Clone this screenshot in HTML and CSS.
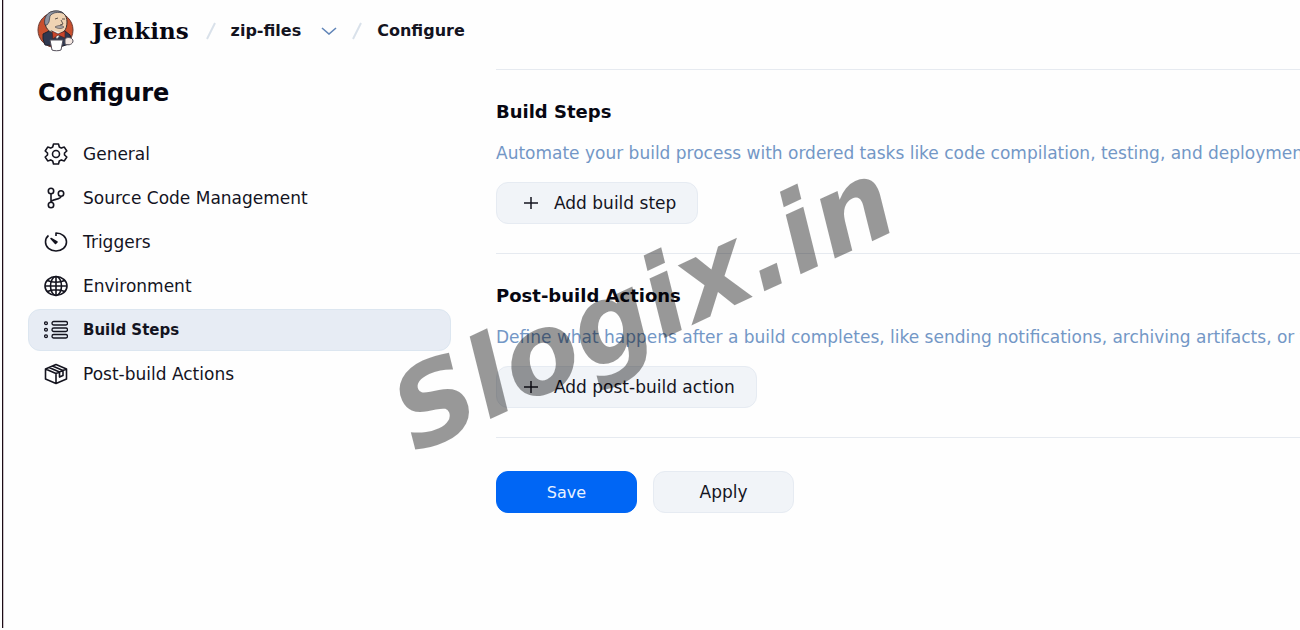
FILE: index.html
```html
<!DOCTYPE html>
<html lang="en">
<head>
    <meta charset="UTF-8">
    <meta name="viewport" content="width=device-width, initial-scale=1.0">
    <title>zip-files Config - Jenkins</title>
    <link rel="stylesheet" href="styles.css">
</head>
<body>
    <div class="page">
        <header class="header">
            <a href="#" class="brand">
                <svg class="logo" viewBox="0 0 38 42" aria-hidden="true">
                    <circle cx="18.500" cy="20" r="17.500" fill="#c9502e" stroke="#6b3a32"/>
                    <path d="M6 24l8-4 14 1 5 4 2 8-9 3-18-1-2-6z" fill="#2f3850" stroke="#22222e"/>
                    <path d="M8 12C8 4 13 1 19 1c7 0 11 4 11 11 0 8-4 12-9 12-6 0-13-4-13-12z" fill="#efd3b3" stroke="#3a3230"/>
                    <path d="M8 15C6 7 11 1 19 1c3 0 5 .5 7 2-5-1-10-1-13 3l-1 6-2 3z" fill="#8d93a0" stroke="#3a3a44" stroke-width=".7"/>
                    <path d="M18 9l3-1M25 9l3 0M24 10l2 4-3 1" fill="none" stroke="#3a3230" stroke-width=".8"/>
                    <path d="M18 17c3-2 7-2 9 0-2 2-6 2-9 0z" fill="#a9a5a5" stroke="#5a5050" stroke-width=".7"/>
                    <path d="M14 20l6 9 5-6" fill="#f4f4f4" stroke="#555" stroke-width=".7"/>
                    <path d="M15 21l6 3 7-3v7l-7-3-5 4z" fill="#c8442a" stroke="#4a2222" stroke-width=".7"/>
                    <path d="M28 29c3-3 8-1 8 2s-4 5-8 3z" fill="#f3e6e0" stroke="#55505a"/>
                    <path d="M13 30h13l-2 10c-2 1-7 1-9 0z" fill="#fff" stroke="#55505a"/>
                </svg>
                <span class="brand-name">Jenkins</span>
            </a>
            <nav class="breadcrumbs">
                <svg class="slash" viewBox="0 0 10 18" aria-hidden="true"><path d="M9 1L1 17"/></svg>
                <a href="#" class="crumb">zip-files</a>
                <button type="button" class="crumb-menu" aria-label="zip-files menu">
                    <svg viewBox="0 0 16 8"><path d="M1 1l7 6 7-6"/></svg>
                </button>
                <svg class="slash" viewBox="0 0 10 18" aria-hidden="true"><path d="M9 1L1 17"/></svg>
                <a href="#" class="crumb">Configure</a>
            </nav>
        </header>

        <div class="content">
            <aside class="sidebar">
                <h1>Configure</h1>
                <nav class="tasks">
                    <a href="#" class="task">
                        <svg class="icon" viewBox="0 0 24 22"><path d="M9.500 1h5l.8 3 2 1.100 3-1 2.500 3.900-2.300 2v2l2.300 2-2.500 3.900-3-1-2 1.100-.8 3h-5l-.8-3-2-1.100-3 1L1.200 14l2.300-2v-2L1.200 8l2.500-3.900 3 1 2-1.100z"/><circle cx="12" cy="11" r="3.500"/></svg>
                        General
                    </a>
                    <a href="#" class="task">
                        <svg class="icon" viewBox="0 0 24 22"><circle cx="7" cy="4" r="2.700"/><circle cx="17" cy="6.500" r="2.700"/><circle cx="7" cy="18" r="2.700"/><path d="M7 6.700v8.600M17 9.200c0 4-10 2.300-10 6.100"/></svg>
                        Source Code Management
                    </a>
                    <a href="#" class="task">
                        <svg class="icon" viewBox="0 0 24 22"><path d="M12 5V2c6 0 10.500 4 10.500 9S18 20 12 20 1.500 16 1.500 11c0-2.500 1-5 3-6.500"/><path d="M7 7.500l6 3.500-1.500 1.500z" fill="currentColor"/></svg>
                        Triggers
                    </a>
                    <a href="#" class="task">
                        <svg class="icon" viewBox="0 0 24 22"><ellipse cx="12" cy="11" rx="11" ry="9.500"/><ellipse cx="12" cy="11" rx="5.500" ry="9.500"/><path d="M12 1.500v19M1 11h22M3.500 5.500c4 2.300 13 2.300 17 0M3.500 16.500c4-2.300 13-2.300 17 0"/></svg>
                        Environment
                    </a>
                    <a href="#" class="task task-active">
                        <svg class="icon icon-thin" viewBox="0 0 24 22"><rect x="8" y="2.500" width="15.500" height="3.500" rx="1.700"/><rect x="8" y="9" width="15.500" height="3.500" rx="1.700"/><rect x="8" y="15.500" width="15.500" height="3.500" rx="1.700"/><circle cx="2" cy="4.200" r="1.400"/><circle cx="2" cy="10.700" r="1.400"/><circle cx="2" cy="17.200" r="1.400"/></svg>
                        Build Steps
                    </a>
                    <a href="#" class="task">
                        <svg class="icon" viewBox="0 0 24 22"><path d="M12 1.500L22.500 6v10L12 20.500 1.500 16V6zM1.500 6L12 10.500 22.500 6M12 10.500v10M5 4.500l10.500 4.600M8.500 3L19 7.500M15.500 9.100v5l3.500-1.600v-5"/></svg>
                        Post-build Actions
                    </a>
                </nav>
            </aside>

            <main class="main">
                <section class="section">
                    <h2>Build Steps</h2>
                    <p>Automate your build process with ordered tasks like code compilation, testing, and deployment.</p>
                    <button type="button" class="btn btn-add">
                        <svg class="plus" viewBox="0 0 16 14" aria-hidden="true"><path d="M8 1v12M1 7h14"/></svg>
                        Add build step
                    </button>
                </section>
                <section class="section">
                    <h2>Post-build Actions</h2>
                    <p>Define what happens after a build completes, like sending notifications, archiving artifacts, or t</p>
                    <button type="button" class="btn btn-add">
                        <svg class="plus" viewBox="0 0 16 14" aria-hidden="true"><path d="M8 1v12M1 7h14"/></svg>
                        Add post-build action
                    </button>
                </section>
                <div class="actions">
                    <button type="submit" class="btn btn-primary">Save</button>
                    <button type="button" class="btn">Apply</button>
                </div>
            </main>
        </div>

        <div class="watermark">Slogix.in</div>
    </div>
</body>
</html>
```

FILE: styles.css
```css
/* General */
* {
    box-sizing: border-box;
}

body {
    margin: 0;
    background: #fefefe;
    color: #14141f;
    font-family: "DejaVu Sans", sans-serif;
    font-size: 17px;
    line-height: 22px;
}

a {
    color: inherit;
    text-decoration: none;
}

svg {
    display: block;
    flex: none;
}

.page {
    position: relative;
    min-height: calc(100vh - 2px);
    margin-left: 2px;
    padding-left: 25px;
    border-left: 1px solid #1c0c16;
    box-shadow: inset 1px 0 #c9c2c6;
    overflow: hidden;
}

/* Header */
.header {
    display: flex;
    align-items: center;
    height: 62px;
    padding-left: 9px;
}

.brand {
    display: flex;
    align-items: center;
    gap: 17px;
}

.logo {
    width: 38px;
    height: 42px;
}

.brand-name {
    font-family: "DejaVu Serif", serif;
    font-size: 23px;
    font-weight: bold;
    color: #070712;
}

.breadcrumbs {
    display: flex;
    align-items: center;
    gap: 15px;
    margin-left: 17px;
}

.slash {
    width: 10px;
    height: 18px;
    fill: none;
    stroke: #d9e1ea;
    stroke-width: 2;
}

.crumb {
    font-size: 16px;
    font-weight: bold;
}

.crumb-menu {
    padding: 4px 0 4px 5px;
    border: 0;
    background: none;
    cursor: pointer;
}

.crumb-menu svg {
    width: 16px;
    height: 8px;
    fill: none;
    stroke: #6185b8;
    stroke-width: 1.6;
}

/* Layout */
.content {
    display: flex;
    gap: 45px;
}

/* Sidebar */
.sidebar {
    flex: none;
    width: 423px;
}

.sidebar h1 {
    margin: 15px 0 24px;
    padding-left: 10px;
    font-size: 24px;
    line-height: 32px;
    color: #070712;
}

.tasks {
    display: flex;
    flex-direction: column;
    gap: 2px;
}

.task {
    display: flex;
    align-items: center;
    gap: 15px;
    height: 42px;
    padding: 0 15px;
    border: 1px solid transparent;
    border-radius: 12px;
}

.task-active {
    background: #e7ecf4;
    border-color: #dce6f0;
    font-size: 15px;
    font-weight: bold;
}

.icon {
    width: 24px;
    height: 22px;
    fill: none;
    stroke: currentColor;
    stroke-width: 1.6;
    stroke-linejoin: round;
}

.icon-thin {
    stroke-width: 1.3;
}

/* Main column */
.main {
    flex: 1;
    min-width: 0;
    margin-top: 7px;
}

.section {
    padding: 31px 0 29px;
    border-top: 1px solid #e6eaf0;
}

.section h2 {
    margin: 0 0 19px;
    font-size: 18px;
    line-height: 22px;
    color: #070712;
}

.section p {
    margin: 0 0 18px;
    color: #7397c6;
    white-space: nowrap;
}

.btn {
    display: flex;
    align-items: center;
    justify-content: center;
    min-width: 141px;
    height: 42px;
    padding: 0 21px;
    border: 1px solid #e6ebf2;
    border-radius: 12px;
    background: #f1f4f8;
    color: #14141f;
    font-family: inherit;
    font-size: 17px;
    cursor: pointer;
}

.btn-add {
    gap: 15px;
    padding-left: 26px;
}

.btn-primary {
    border-color: #0066f5;
    background: #0066f5;
    color: #e8f1ff;
    font-size: 16px;
}

.plus {
    width: 16px;
    height: 14px;
    fill: none;
    stroke: currentColor;
    stroke-width: 1.5;
}

.actions {
    display: flex;
    gap: 16px;
    padding-top: 33px;
    border-top: 1px solid #e6eaf0;
}

/* Watermark over the page */
.watermark {
    position: absolute;
    top: calc(50% - 8px);
    left: calc(50% - 9px);
    transform: translate(-50%, -50%) rotate(-25deg);
    color: rgba(0, 0, 0, 0.4);
    font-size: 110px;
    font-style: italic;
    font-weight: bold;
    line-height: 1;
    pointer-events: none;
}
```
